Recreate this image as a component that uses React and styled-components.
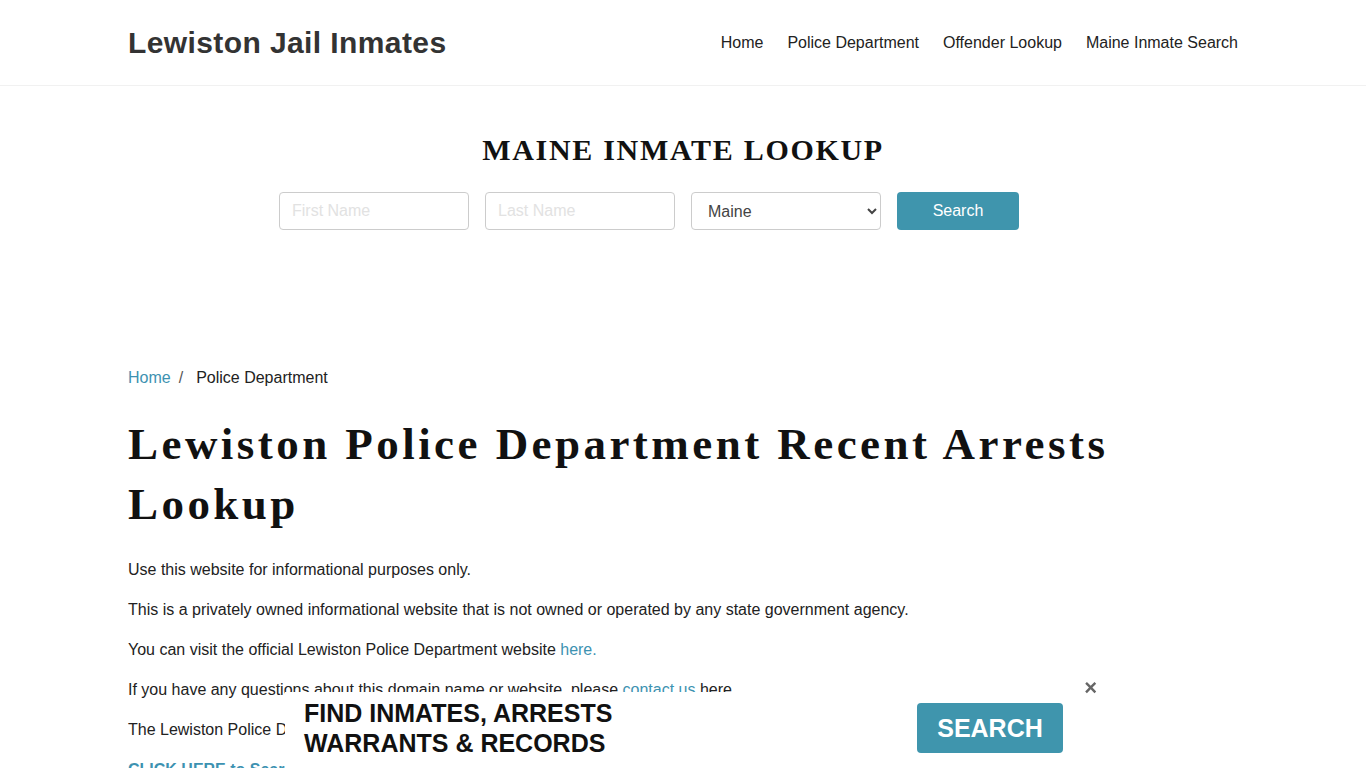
import React from "react";
import styled, { createGlobalStyle } from "styled-components";

const Global = createGlobalStyle`
  * { box-sizing: border-box; }
  body {
    margin: 0;
    background: #fff;
    font-family: "Liberation Sans", Arial, sans-serif;
    color: #222;
    font-size: 16px;
  }
`;

const Header = styled.header`
  height: 86px;
  border-bottom: 1px solid #f1f1f1;
`;

const Container = styled.div`
  width: 1110px;
  margin: 0 auto;
`;

const HeaderInner = styled(Container)`
  height: 100%;
  display: flex;
  align-items: center;
  justify-content: space-between;
`;

const Brand = styled.a`
  font-size: 30px;
  font-weight: 700;
  color: #333;
  text-decoration: none;
  letter-spacing: 0.4px;
  margin-top: 0;
`;

const Nav = styled.nav`
  display: flex;
  gap: 24px;
  margin-top: 1px;
`;

const NavLink = styled.a`
  font-size: 16px;
  color: #222;
  text-decoration: none;
`;

const Lookup = styled.section`
  padding-top: 47px;
  display: flex;
  flex-direction: column;
  align-items: center;
`;

const LookupTitle = styled.h2`
  margin: 0;
  font-family: "Liberation Serif", "Times New Roman", serif;
  font-weight: 700;
  font-size: 30px;
  line-height: 34px;
  letter-spacing: 1.7px;
  color: #111;
`;

const Form = styled.form`
  margin-top: 25px;
  display: flex;
  gap: 16px;
  padding-right: 68px;
`;

const Input = styled.input`
  width: 190px;
  height: 38px;
  border: 1px solid #ccc;
  border-radius: 4px;
  padding: 0 12px;
  font-family: "Liberation Sans", Arial, sans-serif;
  font-size: 16px;
  color: #444;
  &::placeholder { color: #e2e2e2; }
`;

const Select = styled.select`
  width: 190px;
  height: 38px;
  border: 1px solid #ccc;
  border-radius: 4px;
  padding: 0 12px;
  background: #fff;
  font-family: "Liberation Sans", Arial, sans-serif;
  font-size: 16px;
  color: #444;
`;

const Button = styled.button`
  width: 122px;
  height: 38px;
  border: none;
  border-radius: 4px;
  background: #3f95ad;
  color: #fff;
  font-family: "Liberation Sans", Arial, sans-serif;
  font-size: 16px;
`;

const Main = styled(Container)`
  padding-top: 136px;
  padding-bottom: 120px;
`;

const Breadcrumb = styled.div`
  display: flex;
  align-items: center;
  font-size: 16px;
  line-height: 24px;
`;

const Crumb = styled.a`
  color: #3d92b1;
  text-decoration: none;
`;

const Sep = styled.span`
  color: #555;
  padding: 0 13px 0 8px;
`;

const Current = styled.span`
  color: #222;
`;

const Title = styled.h1`
  margin: 24px 0 24px;
  font-family: "Liberation Serif", "Times New Roman", serif;
  font-weight: 700;
  font-size: 45px;
  line-height: 60px;
  letter-spacing: 3.45px;
  color: #111;
  max-width: 1040px;
`;

const P = styled.p`
  margin: 0 0 16px;
  font-size: 16px;
  line-height: 24px;
  color: #222;
`;

const A = styled.a`
  color: #3d92b1;
  text-decoration: none;
  font-weight: ${(p) => (p.$bold ? 700 : 400)};
`;

const Banner = styled.div`
  position: fixed;
  bottom: 0;
  left: 285px;
  width: 796px;
  height: 76px;
  background: #fff;
  display: flex;
  align-items: center;
  justify-content: space-between;
  padding: 0 18px 4px 19px;
`;

const BannerText = styled.div`
  font-family: "Liberation Sans", Arial, sans-serif;
  font-weight: 700;
  font-size: 25px;
  line-height: 30px;
  color: #111;
`;

const BannerButton = styled.button`
  width: 146px;
  height: 50px;
  border: none;
  border-radius: 4px;
  background: #3f95ad;
  color: #fff;
  font-family: "Liberation Sans", Arial, sans-serif;
  font-weight: 700;
  font-size: 25px;
`;

const Close = styled.span`
  position: absolute;
  top: -15px;
  right: -16px;
  font-family: "Liberation Sans", Arial, sans-serif;
  font-size: 22px;
  font-weight: 700;
  color: #666;
  line-height: 22px;
`;

export default function App() {
  return (
    <>
      <Global />
      <Header>
        <HeaderInner>
          <Brand href="#">Lewiston Jail Inmates</Brand>
          <Nav>
            <NavLink href="#">Home</NavLink>
            <NavLink href="#">Police Department</NavLink>
            <NavLink href="#">Offender Lookup</NavLink>
            <NavLink href="#">Maine Inmate Search</NavLink>
          </Nav>
        </HeaderInner>
      </Header>
      <Lookup>
        <LookupTitle>MAINE INMATE LOOKUP</LookupTitle>
        <Form onSubmit={(e) => e.preventDefault()}>
          <Input placeholder="First Name" />
          <Input placeholder="Last Name" />
          <Select defaultValue="Maine">
            <option>Maine</option>
          </Select>
          <Button type="submit">Search</Button>
        </Form>
      </Lookup>
      <Main>
        <Breadcrumb>
          <Crumb href="#">Home</Crumb>
          <Sep>/</Sep>
          <Current>Police Department</Current>
        </Breadcrumb>
        <Title>Lewiston Police Department Recent Arrests Lookup</Title>
        <P>Use this website for informational purposes only.</P>
        <P>This is a privately owned informational website that is not owned or operated by any state government agency.</P>
        <P>
          You can visit the official Lewiston Police Department website <A href="#">here.</A>
        </P>
        <P>
          If you have any questions about this domain name or website, please <A href="#">contact us</A> here.
        </P>
        <P>The Lewiston Police Department recent arrests and inmate records are listed below.</P>
        <P>
          <A href="#" $bold>CLICK HERE to Search</A>
        </P>
      </Main>
      <Banner>
        <BannerText>
          FIND INMATES, ARRESTS
          <br />
          WARRANTS &amp; RECORDS
        </BannerText>
        <BannerButton>SEARCH</BannerButton>
        <Close>×</Close>
      </Banner>
    </>
  );
}
